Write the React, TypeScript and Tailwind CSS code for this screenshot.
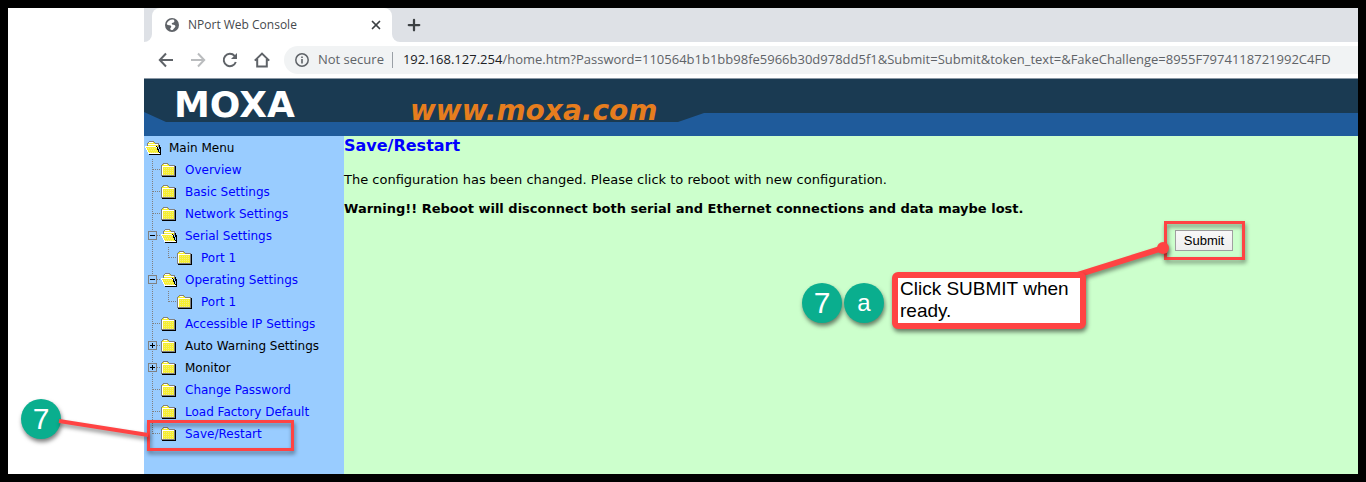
import React from 'react';
import { Plus, X } from 'lucide-react';

type Toggle = 'plus' | 'minus';

interface MenuItem {
  label: string;
  level: 0 | 1 | 2;
  open?: boolean;
  toggle?: Toggle;
  isLink?: boolean;
  isLast?: boolean;
}

const menuItems: MenuItem[] = [
  { label: 'Main Menu', level: 0, open: true },
  { label: 'Overview', level: 1, isLink: true },
  { label: 'Basic Settings', level: 1, isLink: true },
  { label: 'Network Settings', level: 1, isLink: true },
  { label: 'Serial Settings', level: 1, isLink: true, open: true, toggle: 'minus' },
  { label: 'Port 1', level: 2, isLink: true },
  { label: 'Operating Settings', level: 1, isLink: true, open: true, toggle: 'minus' },
  { label: 'Port 1', level: 2, isLink: true },
  { label: 'Accessible IP Settings', level: 1, isLink: true },
  { label: 'Auto Warning Settings', level: 1, toggle: 'plus' },
  { label: 'Monitor', level: 1, toggle: 'plus' },
  { label: 'Change Password', level: 1, isLink: true },
  { label: 'Load Factory Default', level: 1, isLink: true },
  { label: 'Save/Restart', level: 1, isLink: true, isLast: true },
];

interface BranchProps {
  stub?: boolean;
  last?: boolean;
  toggle?: Toggle;
}

function Branch({ stub, last, toggle }: BranchProps) {
  return (
    <svg className="h-[22px] w-4 shrink-0" viewBox="0 0 16 22" shapeRendering="crispEdges" aria-hidden="true">
      <path d={last ? 'M8.5 0V11' : 'M8.5 0V22'} stroke="#808080" strokeDasharray="1 1" />
      {stub && <path d="M9 10.5H16" stroke="#808080" strokeDasharray="1 1" />}
      {toggle && (
        <>
          <rect x="4.5" y="6.5" width="8" height="8" fill="#9cf" stroke="#808080" />
          <path d="M6 10.5H11" stroke="#000" />
          {toggle === 'plus' && <path d="M8.5 8V13" stroke="#000" />}
        </>
      )}
    </svg>
  );
}

function Folder({ open }: { open?: boolean }) {
  return (
    <svg className="h-[22px] w-6 shrink-0" viewBox="0 0 24 22" shapeRendering="crispEdges" aria-hidden="true">
      {open ? (
        <>
          <path d="M5 17.5H17M15.5 8V12M16.5 10V18" stroke="#000" />
          <path d="M3.5 14V6.5L5.5 4.5H9.5L11.5 6.5H14.5V10" fill="#f6ef30" stroke="#808080" />
          <path d="M4 7.5H14M5 5.5H9" stroke="#fff" />
          <path d="M1.5 9.5H12.5L15.5 16.5H4.5Z" fill="#f6ef30" stroke="#fff" />
          <path d="M12.5 9L15.5 16" stroke="#000" />
          <path d="M4 11.5H12M5 13.5H13M6 15.5H14" stroke="#f1eb86" strokeDasharray="1 1" />
        </>
      ) : (
        <>
          <path d="M2 17.5H16M15.5 7V18" stroke="#000" />
          <path d="M1.5 16.5V6.5L3.5 4.5H7.5L9.5 6.5H14.5V16.5Z" fill="#f6ef30" stroke="#808080" />
          <path d="M2.5 16V7.5H14" fill="none" stroke="#fff" />
          <path d="M4 5.5H7" stroke="#fff" />
          <path d="M4 9.5H14M4 11.5H14M4 13.5H14M4 15.5H14" stroke="#f1eb86" strokeDasharray="1 1" />
        </>
      )}
    </svg>
  );
}

function MenuRow({ item }: { item: MenuItem }) {
  return (
    <li className="flex h-[22px] items-center whitespace-nowrap">
      {item.level > 0 && <Branch stub={item.level === 1} last={item.isLast} toggle={item.toggle} />}
      {item.level === 2 && <Branch stub last />}
      <Folder open={item.open} />
      {item.isLink ? (
        <a href="#" className="pl-px text-[#0000ff]">{item.label}</a>
      ) : (
        <span className="pl-px">{item.label}</span>
      )}
    </li>
  );
}

function BrowserChrome() {
  return (
    <div className="font-['Open_Sans',sans-serif]">
      <div className="flex h-[34px] bg-[#dee1e6]">
        <div className="w-2 bg-white">
          <div className="h-full rounded-br-lg bg-[#dee1e6]" />
        </div>
        <div className="flex w-60 items-center rounded-t-lg bg-white pr-[9px] pl-[13px]">
          <svg className="size-[14px]" viewBox="0 0 14 14" aria-hidden="true">
            <circle cx="7" cy="7" r="7" fill="#5f6368" />
            <path
              d="M8.4 1.6C5.4 1.2 2.6 3 1.8 5.6C1.5 7 3 7.3 4.6 7.2C6 7.2 6.3 8 6.2 9C6.1 9.7 5.2 10 5.2 10.8C5.2 11.8 6.6 12.4 7.6 12.1C8.6 11.6 8.8 10.4 9.8 9.6C10.8 8.8 10.6 7.6 9.4 7.1C8.4 6.6 7.3 6.9 6.8 6C6.3 5 7.6 4.6 8.6 4.4C9.6 4.1 9.8 2.6 8.4 1.6Z"
              fill="#fff"
            />
          </svg>
          <span className="flex-1 pl-[9px] text-[12px] text-[#45494d]">NPort Web Console</span>
          <button aria-label="Close tab">
            <X className="size-[14px] text-[#3c4043]" strokeWidth={3} />
          </button>
        </div>
        <div className="w-2 bg-white">
          <div className="h-full rounded-bl-lg bg-[#dee1e6]" />
        </div>
        <button aria-label="New tab" className="ml-[5px]">
          <Plus className="size-[18px] text-[#3c4043]" strokeWidth={3} />
        </button>
      </div>

      <div className="flex h-9 items-center bg-white">
        <div className="flex w-[140px] shrink-0 items-center gap-4 pl-[14px] text-[#5f6368]">
          <button aria-label="Back">
            <svg className="size-4" viewBox="0 0 16 16" fill="none" stroke="currentColor" strokeWidth="2">
              <path d="M15 8H2M8 1.5L1.8 8L8 14.5" />
            </svg>
          </button>
          <button aria-label="Forward" className="text-[#babcbe]">
            <svg className="size-4" viewBox="0 0 16 16" fill="none" stroke="currentColor" strokeWidth="2">
              <path d="M1 8H14M8 1.5L14.2 8L8 14.5" />
            </svg>
          </button>
          <button aria-label="Reload">
            <svg className="size-4" viewBox="0 0 16 16" fill="none" stroke="currentColor" strokeWidth="2">
              <path d="M13.8 10A6.2 6.2 0 1 1 12.6 3.8L14 5.4" />
              <path d="M15 1V7H9Z" fill="currentColor" stroke="none" />
            </svg>
          </button>
          <button aria-label="Home">
            <svg className="size-4" viewBox="0 0 16 16" fill="none" stroke="currentColor" strokeWidth="2">
              <path d="M0.8 8.6L8 1.6L15.2 8.6M3.2 7V14.6H12.8V7" />
            </svg>
          </button>
        </div>
        <div className="flex h-7 min-w-0 flex-1 items-center rounded-l-full bg-[#f1f3f4] pl-[11px] text-[13px] text-[#5f6368]">
          <svg className="size-[14px] shrink-0" viewBox="0 0 14 14" aria-hidden="true">
            <circle cx="7" cy="7" r="6.2" fill="none" stroke="#5f6368" strokeWidth="1.5" />
            <path d="M7 6V10.6M7 3.4V5" stroke="#5f6368" strokeWidth="1.6" />
          </svg>
          <span className="pl-[9px] whitespace-nowrap">Not secure</span>
          <span className="mx-2 h-4 w-px shrink-0 bg-[#9aa0a6]" />
          <label htmlFor="address" className="pl-[2px] text-[#202124]">192.168.127.254</label>
          <input
            id="address"
            type="text"
            readOnly
            className="min-w-0 flex-1 bg-transparent outline-none"
            value="/home.htm?Password=110564b1b1bb98fe5966b30d978dd5f1&Submit=Submit&token_text=&FakeChallenge=8955F7974118721992C4FD"
          />
        </div>
      </div>
    </div>
  );
}

function SiteHeader() {
  return (
    <header className="border-t border-[#8b98a5] bg-[#1f5b9b] pb-[14px]">
      <div className="flex h-[43px] items-center bg-[#1a3a52] pl-[30px] font-['DejaVu_Sans',sans-serif] leading-none font-bold [clip-path:polygon(0_0,100%_0,100%_34px,560px_34px,534px_43px,22px_43px,0_33px)]">
        <span className="w-[236px] pt-2 text-[36px] text-white">MOXA</span>
        <span className="pt-5 text-[28px] text-[#e67d1e] italic">www.moxa.com</span>
      </div>
    </header>
  );
}

function Badge({ children }: { children: React.ReactNode }) {
  return (
    <span className="flex size-10 items-center justify-center rounded-full bg-[#0aae8e] font-['Liberation_Sans',sans-serif] text-[30px] leading-none text-white shadow-[1px_3px_4px_rgba(0,0,0,0.5)]">
      {children}
    </span>
  );
}

// Numbered steps, frames and pointers laid over the page
function Annotations() {
  return (
    <div className="pointer-events-none absolute inset-0">
      <div className="absolute top-[412px] left-[139px] h-[31px] w-[147px] border-[3px] border-[#ff4343] drop-shadow-[1px_3px_2px_rgba(0,0,0,0.45)]" />
      <div className="absolute top-[213px] left-[1156px] h-[39px] w-[81px] border-[3px] border-[#ff4343] drop-shadow-[1px_3px_2px_rgba(0,0,0,0.45)]" />
      <div className="absolute top-[391px] left-[13px]">
        <Badge>7</Badge>
      </div>
      <svg className="absolute inset-0 h-full w-full drop-shadow-[1px_3px_2px_rgba(0,0,0,0.45)]" aria-hidden="true">
        <path d="M51 413L140 427" stroke="#ff4343" strokeWidth="4" />
        <path d="M1066 268L1155 240" stroke="#ff4343" strokeWidth="6" />
        <circle cx="1155" cy="240" r="6" fill="#ff4343" />
      </svg>
      <div className="absolute top-[264px] left-[794px] flex items-start">
        <div className="flex gap-[2px] pt-[11px]">
          <Badge>7</Badge>
          <Badge>
            <span className="text-[24px]">a</span>
          </Badge>
        </div>
        <p className="ml-2 w-[194px] rounded-md border-6 border-[#ff4343] bg-white pb-px pl-[2px] font-['Liberation_Sans',sans-serif] text-[19px] leading-[22px] shadow-[1px_3px_4px_rgba(0,0,0,0.5)]">
          Click SUBMIT when ready.
        </p>
      </div>
    </div>
  );
}

export default function App() {
  return (
    <div className="relative flex min-h-screen flex-col overflow-hidden border-8 border-black bg-white pl-34 text-black">
      <BrowserChrome />
      <SiteHeader />
      <div className="flex flex-1 font-['DejaVu_Sans',sans-serif] text-[13px]">
        <nav className="w-[200px] shrink-0 bg-[#99ccff] pt-px text-[12px]">
          <ul>
            {menuItems.map((item, index) => (
              <MenuRow key={index} item={item} />
            ))}
          </ul>
        </nav>
        <main className="min-w-0 flex-1 bg-[#ccffcc]">
          <h1 className="text-[16px] leading-5 font-bold text-[#0000ff]">Save/Restart</h1>
          <p className="pt-[14px] leading-5">
            The configuration has been changed. Please click to reboot with new configuration.
          </p>
          <p className="pt-[9px] leading-5 font-bold">
            Warning!! Reboot will disconnect both serial and Ethernet connections and data maybe lost.
          </p>
          <div className="flex justify-end pt-[11px] pr-[125px]">
            <button className="h-[21px] w-[58px] border border-[#a0a0a0] bg-linear-to-b from-[#f8f8f8] to-[#eeeeee] font-['Liberation_Sans',sans-serif] text-[13px] leading-none">
              Submit
            </button>
          </div>
        </main>
      </div>
      <Annotations />
    </div>
  );
}
